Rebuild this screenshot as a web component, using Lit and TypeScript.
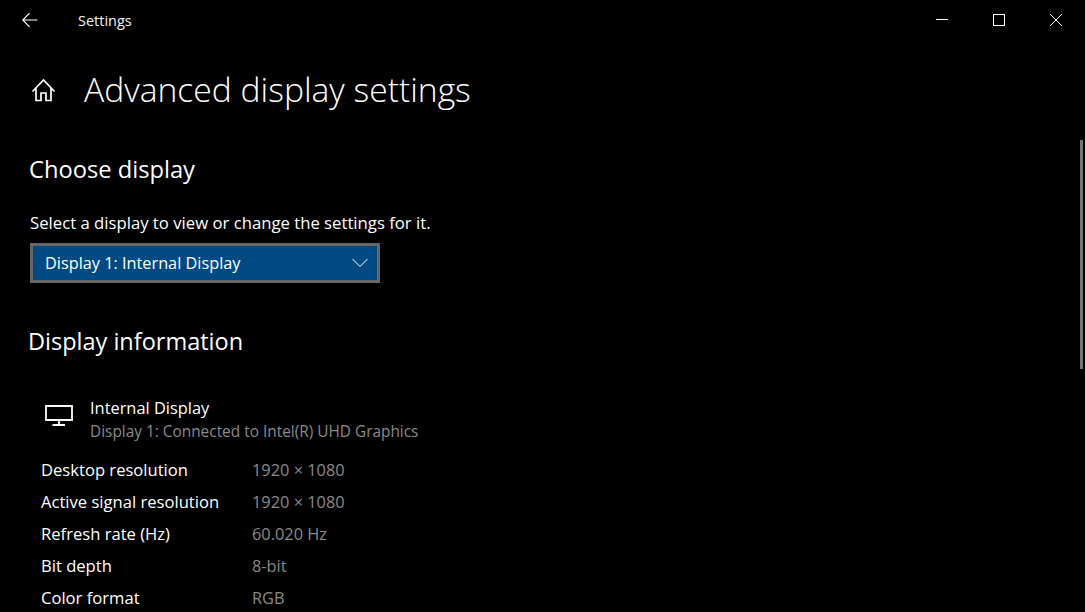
import { LitElement, html, css } from "lit";
import { customElement } from "lit/decorators.js";

const rows: [string, string][] = [
  ["Desktop resolution", "1920 × 1080"],
  ["Active signal resolution", "1920 × 1080"],
  ["Refresh rate (Hz)", "60.020 Hz"],
  ["Bit depth", "8-bit"],
  ["Color format", "RGB"],
];

@customElement("app-root")
export class AppRoot extends LitElement {
  static styles = css`
    :host {
      display: block;
      position: relative;
      width: 1085px;
      height: 612px;
      overflow: hidden;
      background: #000;
      color: #fff;
      font-family: "Open Sans", "Noto Sans", sans-serif;
    }
    svg { display: block; fill: none; stroke: currentColor; stroke-width: 1; }
    .titlebar { display: flex; align-items: center; height: 40px; }
    .back { margin-left: 22px; width: 16px; height: 16px; stroke-width: 1.2; }
    .apptitle { margin-left: 40px; font-size: 14.5px; color: #f2f2f2; }
    .winbtns { margin-left: auto; margin-right: 1px; display: flex; }
    .winbtn { box-sizing: border-box; width: 57px; height: 40px; padding-left: 23px; display: flex; align-items: center; }
    .page { padding: 0 0 0 29px; }
    .heading { display: flex; align-items: center; height: 60px; margin-top: 20px; }
    .home { width: 28px; height: 28px; stroke-width: 1.7; }
    .heading h1 { margin: 0 0 2px 27px; font-size: 33.65px; font-weight: 300; line-height: 58px; }
    h2 { margin: 0; font-size: 23.7px; font-weight: 400; line-height: 32px; }
    .choose { margin-top: 33px; }
    .label { margin: 27px 0 0 1px; font-size: 16.72px; line-height: 22px; }
    .select {
      box-sizing: border-box; margin: 9px 0 0 1px; width: 350px; height: 40px;
      display: flex; align-items: center; justify-content: space-between;
      background: #004a83; border: 3px solid #666; padding: 0 9px 0 12px;
      font-size: 16.3px;
    }
    .info { margin-top: 42px; margin-left: -1px; font-size: 23.5px; }
    .device { display: flex; margin: 39px 0 0 13px; }
    .monitor { width: 32px; height: 32px; margin-top: 4px; stroke-width: 1.8; }
    .device-text { margin-left: 16px; }
    .device-name { font-size: 16.4px; line-height: 23px; }
    .device-sub { margin-top: 1px; font-size: 15.4px; line-height: 23px; color: #8a8a8a; }
    .grid { display: grid; grid-template-columns: 211px auto; justify-content: start; grid-auto-rows: 32px; margin: 11px 0 0 12px; align-items: baseline; font-size: 16.6px; line-height: 32px; }
    .val { color: #8a8a8a; font-size: 16.35px; }
    .scroll { position: absolute; left: 1080px; top: 140px; width: 3px; height: 229px; background: #777; }
  `;

  render() {
    return html`
      <div class="titlebar">
        <svg class="back" viewBox="0 0 16 16"><path d="M15.500 8H.8M7.500 1.200.8 8l6.700 6.800" /></svg>
        <span class="apptitle">Settings</span>
        <div class="winbtns">
          <div class="winbtn"><svg width="12" height="12" viewBox="0 0 12 12"><path d="M0 5.500h12" /></svg></div>
          <div class="winbtn"><svg width="12" height="12" viewBox="0 0 12 12"><rect x=".5" y=".5" width="11" height="11" /></svg></div>
          <div class="winbtn"><svg width="12" height="12" viewBox="0 0 12 12"><path d="M0 0l12 12M12 0 0 12" /></svg></div>
        </div>
      </div>
      <div class="page">
        <div class="heading">
          <svg class="home" viewBox="0 0 28 28"><path d="M3.500 15.500 14.500 4 25.500 15.500M7 12V24.500H12V17H17V24.500H22V12" /></svg>
          <h1>Advanced display settings</h1>
        </div>
        <h2 class="choose">Choose display</h2>
        <div class="label">Select a display to view or change the settings for it.</div>
        <div class="select">
          <span>Display 1: Internal Display</span>
          <svg width="16" height="10" viewBox="0 0 16 10"><path d="M.5 1 8 8.500 15.500 1" /></svg>
        </div>
        <h2 class="info">Display information</h2>
        <div class="device">
          <svg class="monitor" viewBox="0 0 32 32"><path d="M4 6H30V20H4ZM17 20V25M10.500 25H23" /></svg>
          <div class="device-text">
            <div class="device-name">Internal Display</div>
            <div class="device-sub">Display 1: Connected to Intel(R) UHD Graphics</div>
          </div>
        </div>
        <div class="grid">
          ${rows.map(([k, v]) => html`<div>${k}</div><div class="val">${v}</div>`)}
        </div>
      </div>
      <div class="scroll"></div>
    `;
  }
}
